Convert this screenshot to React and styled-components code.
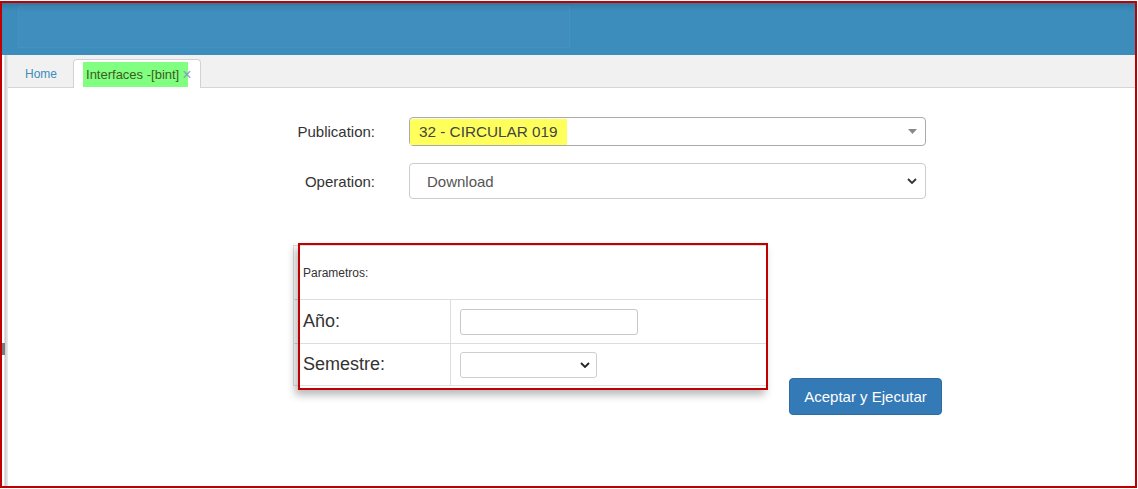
import React from "react";
import styled, { createGlobalStyle } from "styled-components";

const GlobalStyle = createGlobalStyle`
  html, body {
    margin: 0;
    padding: 0;
    background: #ffffff;
    overflow: hidden;
  }
  body {
    font-family: "Liberation Sans", Arial, sans-serif;
  }
`;

const ChevronDown = ({ size = 10, color = "#333" }) => (
  <svg width={size} height={size * 0.6} viewBox="0 0 10 6">
    <polyline points="1,1 5,5 9,1" fill="none" stroke={color} strokeWidth="1.8" />
  </svg>
);

const Caret = () => (
  <svg width="9" height="5" viewBox="0 0 9 5">
    <polygon points="0,0 9,0 4.5,5" fill="#888" />
  </svg>
);

const App = () => {
  return (
    <>
      <GlobalStyle />
      <Frame>
        <Header>
          <HeaderInset />
        </Header>
        <Main>
          <Gutter>
            <Grip />
          </Gutter>
          <Panel>
            <TabBar>
              <Tab>Home</Tab>
              <ActiveTab>
                <Marker>Interfaces -[bint]</Marker>
                <Close>×</Close>
              </ActiveTab>
            </TabBar>
            <Body>
              <Form>
                <Label>Publication:</Label>
                <Picker $height={29} $border="#aaa">
                  <Highlight>32 - CIRCULAR 019</Highlight>
                  <Arrow>
                    <Caret />
                  </Arrow>
                </Picker>
                <Label>Operation:</Label>
                <Picker $height={36} $border="#ccc">
                  <PickerText>Download</PickerText>
                  <Arrow>
                    <ChevronDown />
                  </Arrow>
                </Picker>
              </Form>

              <ParamsRow>
                <TableWrap>
                  <ParamTable>
                    <Caption>Parametros:</Caption>
                    <Cell $first>Año:</Cell>
                    <Cell>
                      <TextBox />
                    </Cell>
                    <Cell $first>Semestre:</Cell>
                    <Cell>
                      <SmallSelect>
                        <ChevronDown size={10} color="#222" />
                      </SmallSelect>
                    </Cell>
                  </ParamTable>
                  <RedBox />
                </TableWrap>
                <RunButton>Aceptar y Ejecutar</RunButton>
              </ParamsRow>
            </Body>
          </Panel>
        </Main>
      </Frame>
    </>
  );
};

export default App;

const Frame = styled.div`
  box-sizing: border-box;
  width: 1137px;
  height: 487px;
  margin-top: 1px;
  border: 2px solid #c00000;
  display: flex;
  flex-direction: column;
  overflow: hidden;
`;

const Header = styled.div`
  height: 52px;
  flex-shrink: 0;
  background: linear-gradient(#3378a2 0px, #3a88b6 6px, #3c8dbc 9px);
  padding: 3px 0 0 16px;
  box-sizing: border-box;
`;

const HeaderInset = styled.div`
  width: 552px;
  height: 42px;
  background: rgba(255, 255, 255, 0.015);
  border: 1px solid rgba(255, 255, 255, 0.04);
  box-sizing: border-box;
`;

const Main = styled.div`
  flex: 1;
  display: flex;
  min-height: 0;
`;

const Gutter = styled.div`
  width: 6px;
  flex-shrink: 0;
  background: linear-gradient(to right, #fff 0px, #fff 2px, #c4c4c4 3px, #d8d8d8 4px, #ebebeb 6px);
  display: flex;
  flex-direction: column;
`;

const Grip = styled.div`
  width: 3px;
  height: 12px;
  margin-top: 288px;
  background: #7a7a7a;
`;

const Panel = styled.div`
  flex: 1;
  display: flex;
  flex-direction: column;
`;

const TabBar = styled.div`
  height: 33px;
  box-sizing: border-box;
  background: #f1f1f1;
  border-bottom: 1px solid #d6d6d6;
  display: flex;
  align-items: flex-end;
  padding-left: 2px;
`;

const Tab = styled.div`
  height: 32px;
  box-sizing: border-box;
  padding: 5px 15px 0 15px;
  display: flex;
  align-items: center;
  font-size: 12px;
  color: #3c8dbc;
`;

const ActiveTab = styled.div`
  height: 29px;
  margin-bottom: -1px;
  margin-left: 1px;
  box-sizing: border-box;
  padding: 1px 8px 0 9px;
  display: flex;
  align-items: center;
  background: #fff;
  border: 1px solid #d2d2d2;
  border-bottom: none;
  border-radius: 4px 4px 0 0;
`;

const Marker = styled.span`
  display: flex;
  align-items: center;
  height: 25px;
  padding: 0 9px 0 3px;
  background: #80ff80;
  font-size: 13px;
  color: #3f5a22;
`;

const Close = styled.span`
  margin-left: -6px;
  font-size: 16px;
  color: #8a9fb4;
  position: relative;
`;

const Body = styled.div`
  flex: 1;
  background: #fff;
  padding-top: 29px;
`;

const Form = styled.div`
  display: grid;
  grid-template-columns: 100px 517px;
  column-gap: 34px;
  row-gap: 17px;
  align-items: center;
  margin-left: 267px;
`;

const Label = styled.div`
  text-align: right;
  font-size: 15px;
  color: #333;
`;

const Picker = styled.div`
  height: ${(p) => p.$height}px;
  box-sizing: border-box;
  border: 1px solid ${(p) => p.$border};
  border-radius: 4px;
  display: flex;
  align-items: stretch;
  background: #fff;
`;

const Highlight = styled.span`
  margin-top: 1px;
  padding: 0 9px 0 9px;
  display: flex;
  align-items: center;
  background: #ffff5c;
  font-size: 15.3px;
  color: #444;
  border-radius: 3px 0 0 0;
`;

const PickerText = styled.span`
  display: flex;
  align-items: center;
  padding-left: 17px;
  font-size: 15px;
  color: #555;
`;

const Arrow = styled.span`
  margin-left: auto;
  display: flex;
  align-items: center;
  padding-right: 8px;
`;

const ParamsRow = styled.div`
  display: flex;
  align-items: flex-start;
  margin: 46px 0 0 285px;
`;

const TableWrap = styled.div`
  position: relative;
`;

const ParamTable = styled.div`
  width: 474px;
  box-sizing: border-box;
  display: grid;
  grid-template-columns: 157px 1fr;
  grid-template-rows: 54px 43px 42px;
  border: 1px solid #dddddd;
  border-right: none;
  border-bottom-color: #e2e2e2;
`;

const Caption = styled.div`
  grid-column: 1 / span 2;
  display: flex;
  align-items: center;
  padding-left: 9px;
  font-size: 12px;
  color: #333;
  border-bottom: 1px solid #dddddd;
`;

const Cell = styled.div`
  display: flex;
  align-items: center;
  padding-left: 9px;
  font-size: 18px;
  color: #333;
  border-right: ${(p) => (p.$first ? "1px solid #dddddd" : "none")};
  & + & + & {
    border-top: 1px solid #dddddd;
  }
`;

const TextBox = styled.div`
  width: 178px;
  height: 26px;
  box-sizing: border-box;
  border: 1px solid #c8c8c8;
  border-radius: 3px;
  background: #fff;
`;

const SmallSelect = styled.div`
  width: 137px;
  height: 26px;
  box-sizing: border-box;
  border: 1px solid #cfcfcf;
  border-radius: 3px;
  display: flex;
  align-items: center;
  justify-content: flex-end;
  padding-right: 6px;
`;

const RedBox = styled.div`
  position: absolute;
  left: 5px;
  top: -2px;
  width: 470px;
  height: 147px;
  box-sizing: border-box;
  border: 2px solid #c00000;
  box-shadow: -3px 5px 8px rgba(0, 0, 0, 0.28);
  pointer-events: none;
`;

const RunButton = styled.button`
  margin: 133px 0 0 22px;
  width: 153px;
  height: 37px;
  background: #337ab7;
  border: 1px solid #2e6da4;
  border-radius: 4px;
  color: #fff;
  font-family: "Liberation Sans", Arial, sans-serif;
  font-size: 15px;
  padding: 0;
`;
